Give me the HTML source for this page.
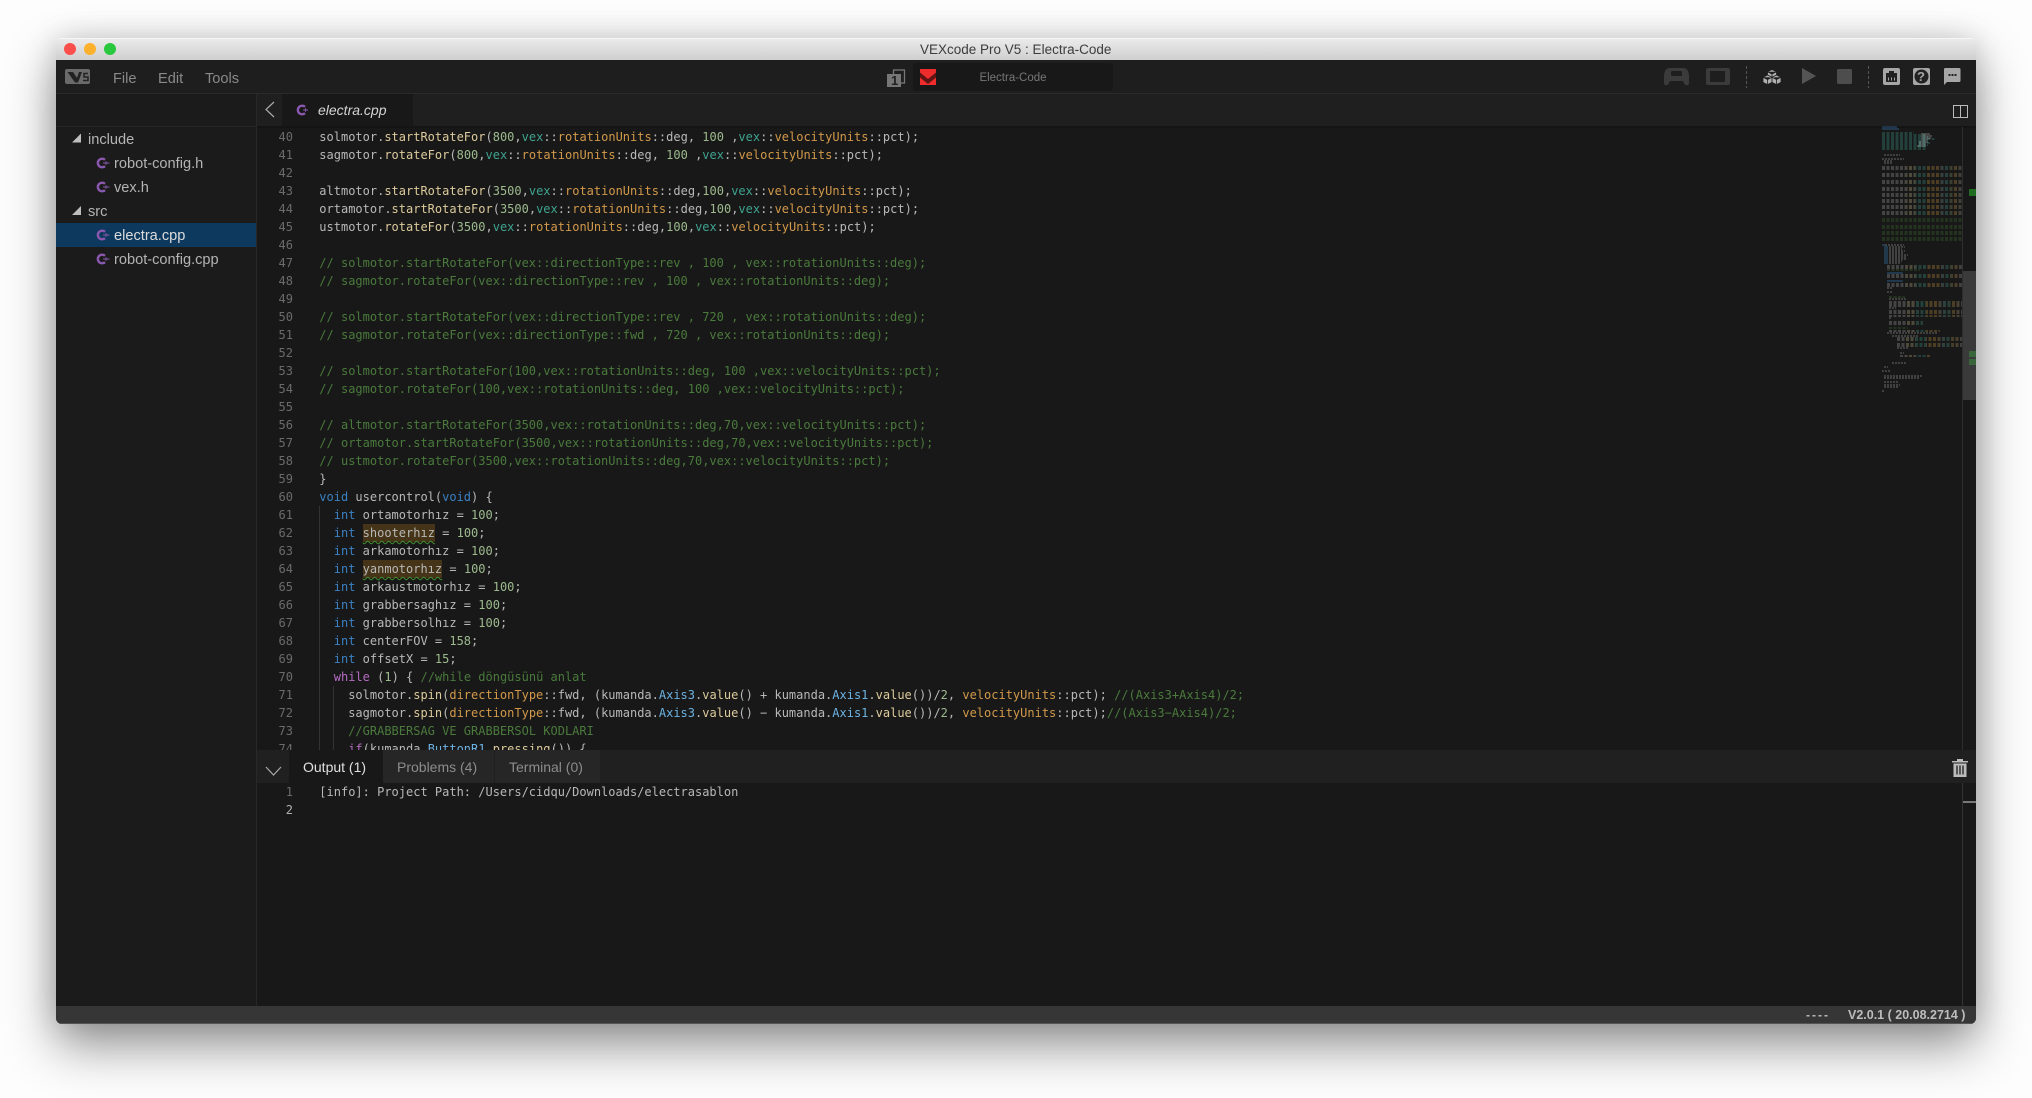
<!DOCTYPE html>
<html><head><meta charset="utf-8"><title>VEXcode Pro V5 : Electra-Code</title>
<style>
html,body{margin:0;padding:0;width:2032px;height:1098px;overflow:hidden;background:#fdfdfd}
#s{position:absolute;left:56px;top:38px;width:1920px;height:986px;border-radius:6px;box-shadow:0 22px 50px rgba(0,0,0,.42),0 0 30px rgba(0,0,0,.14)}
#w{position:absolute;left:0;top:0;width:2032px;height:1098px;clip-path:inset(38px 56px 74px 56px round 6px);font-family:"Liberation Sans",sans-serif}
#w>div,#w>svg{position:absolute}
.u{white-space:nowrap;font-size:14px;line-height:18px}
.b{font-size:14.6px}
pre{position:absolute;margin:0;font:12px/18px "DejaVu Sans Mono",monospace;color:#b8b8b8;font-variant-ligatures:none}
.m{color:#dccb9c}.n{color:#9dba8e}.t{color:#3fa38f}.o{color:#d2994a}.c{color:#4a7a3c}.k{color:#3a80c2}.p{color:#b56cc2}.a{color:#6cb2e2}
.h{background:#453417;display:inline-block;height:18px;text-decoration:underline wavy #3f9030 .6px;text-underline-offset:3px}
</style></head><body>
<div id="s"></div>
<div id="w">
<div style="left:56px;top:38px;width:1920px;height:22px;background:linear-gradient(#ececec,#cfcfcf);box-shadow:inset 0 1px 0 #f6f6f6"></div>
<div style="left:56px;top:60px;width:1920px;height:964px;background:#1b1b1b"></div>
<svg style="left:0;top:0" width="2032" height="1098">
<circle cx="70" cy="49" r="6" fill="#fc4f4b"/><circle cx="90" cy="49" r="6" fill="#fdb02c"/><circle cx="110" cy="49" r="6" fill="#2ac83f"/>
<rect x="56" y="60" width="1920" height="33" fill="#1e1e1e"/><rect x="56" y="93" width="1920" height="1" fill="#2a2a2a"/>
<rect x="257" y="94" width="1719" height="32" fill="#1f1f1f"/>
<rect x="282" y="94" width="131" height="32" fill="#181818"/>
<rect x="56" y="126" width="200" height="1" fill="#262626"/>
<rect x="257" y="126" width="1719" height="624" fill="#181818"/>
<rect x="257" y="126" width="1719" height="2" fill="#141414"/>
<rect x="256" y="94" width="1" height="912" fill="#282828"/>
<rect x="56" y="223" width="200" height="24" fill="#0e395f"/>
<!-- bottom panel -->
<rect x="257" y="750" width="1719" height="33" fill="#202020"/>
<rect x="257" y="783" width="1719" height="223" fill="#181818"/>
<rect x="289" y="750" width="94" height="33" fill="#181818"/>
<rect x="383" y="750" width="111" height="33" fill="#262626"/>
<rect x="495" y="750" width="105" height="33" fill="#262626"/>
<rect x="56" y="1006" width="1920" height="18" fill="#363636"/><rect x="56" y="1023" width="1920" height="1" fill="#555"/>
<!-- scrollbars -->
<rect x="1962" y="127" width="1" height="623" fill="#2e2e2e"/>
<rect x="1963" y="271" width="13" height="129" fill="#3a3a3a"/>
<rect x="1969" y="189" width="7" height="7" fill="#1f6b1f"/>
<rect x="1969" y="351" width="7" height="6" fill="#38653a"/><rect x="1969" y="359" width="7" height="6" fill="#38653a"/>
<rect x="1962" y="783" width="1" height="223" fill="#333"/><rect x="1963" y="801" width="13" height="2" fill="#777"/>
<!-- indent guides -->
<rect x="319" y="506" width="1" height="244" fill="#333"/><rect x="333" y="686" width="1" height="64" fill="#333"/>
<!-- minimap -->
<defs><linearGradient id="g" gradientUnits="userSpaceOnUse" x1="1882" y1="0" x2="1962" y2="0">
<stop offset="0" stop-color="#a8a8a8"/><stop offset=".3" stop-color="#a8a8a8"/><stop offset=".3" stop-color="#c9b98a"/><stop offset=".42" stop-color="#c9b98a"/><stop offset=".42" stop-color="#3c9b88"/><stop offset=".55" stop-color="#3c9b88"/><stop offset=".55" stop-color="#c8923f"/><stop offset=".72" stop-color="#c8923f"/><stop offset=".72" stop-color="#999"/><stop offset=".82" stop-color="#3c9b88"/><stop offset=".9" stop-color="#c8923f"/><stop offset="1" stop-color="#999"/>
</linearGradient></defs>
<g stroke-width=".9" fill="none" opacity=".62">
<path d="M1882 127H1897M1882 129H1899" stroke="#3a80c2"/>
<path d="M1882 133H1914M1882 135H1926M1882 137H1928M1882 139H1936M1882 141H1926M1882 143H1930M1882 145H1928M1882 147H1926M1882 149H1926" stroke="#3c9b88" stroke-dasharray="3 1.500"/>
<path d="M1921 134H1930M1921 136H1932M1921 138H1931M1921 140H1928M1919 142H1928M1919 144H1926M1917 146H1926" stroke="#aaa"/>
<path d="M1884 155H1900M1882 159H1904M1884 161H1893M1884 163H1893" stroke="#9a9a9a" stroke-dasharray="2 1"/>
<path d="M1882 167H1962M1882 169H1962M1882 174H1962M1882 176H1962M1882 181H1962M1882 183H1962M1882 188H1962M1882 190H1962M1882 194H1962M1882 196H1962M1882 200H1962M1882 202H1962M1882 206H1962M1882 208H1962M1882 212H1962M1882 214H1962M1887 266H1962M1887 268H1962M1887 275H1962M1887 277H1962M1887 284H1962M1887 286H1962M1889 302H1962M1889 304H1962M1889 306H1962M1889 311H1962M1889 313H1962M1889 316H1962M1889 322H1923M1889 324H1923M1889 331H1940M1897 338H1962M1897 340H1962M1897 344H1962M1897 346H1962M1900 356H1930" stroke="url(#g)" stroke-dasharray="3 1.500"/>
<path d="M1882 219H1962M1882 221H1962M1882 226H1962M1882 228H1962M1882 232H1962M1882 234H1962M1882 238H1962M1882 240H1962M1887 270H1920M1889 297H1905M1889 328H1908" stroke="#40702f" stroke-dasharray="3 1.500"/>
<path d="M1884 247H1888M1884 249H1888M1884 251H1888M1884 253H1888M1884 255H1888M1884 257H1888M1884 259H1888M1884 261H1888M1884 263H1888M1882 245H1885M1887 273H1903M1887 281H1903" stroke="#3a80c2"/>
<path d="M1889 247H1905M1889 249H1902M1889 251H1905M1889 253H1903M1889 255H1908M1889 257H1906M1889 259H1906M1889 261H1902M1889 263H1900M1885 245H1904M1887 288H1892M1887 292H1892M1889 299H1906M1889 308H1896M1889 318H1892M1887 333H1938M1892 336H1918M1897 348H1908M1900 353H1904M1892 363H1906M1884 367H1888M1882 371H1890M1884 376H1922M1884 378H1920M1884 382H1899M1884 385H1900M1884 387H1898M1882 391H1885" stroke="#9a9a9a" stroke-dasharray="2 1"/>
</g>
<!-- menu-left logo -->
<rect x="65" y="69" width="25" height="15" rx="2" fill="#6a6a6a"/>
<path d="M67.500 72H73L77 78 79 72h3L78 82.500H75Z" fill="#222"/>
<path d="M88 73.500H84V77H88V80.500H83" stroke="#222" stroke-width="1.500" fill="none"/>
<!-- project icons -->
<rect x="893.500" y="70" width="11" height="13" fill="none" stroke="#777" stroke-width="1.300"/>
<rect x="887" y="74" width="14" height="13" fill="#777"/>
<rect x="913" y="63" width="200" height="28" rx="4" fill="#181818"/>
<rect x="920" y="69" width="16" height="16" fill="#ee2c2c"/>
<path d="M920 72.500 928 79 936 72.500V77.500L928 84 920 77.500Z" fill="#5e1414"/>
<!-- right toolbar -->
<path d="M1670 68h13c4 0 6 3 6 9v6c0 3-4 3-5 0l-1-2h-13l-1 2c-1 3-5 3-5 0v-6c0-6 2-9 6-9z" fill="#3b3b3b"/>
<rect x="1671" y="71" width="11" height="5" rx="1" fill="#1e1e1e"/>
<rect x="1706" y="68" width="24" height="17" rx="2" fill="#3b3b3b"/><rect x="1710" y="71" width="15" height="11" fill="#1e1e1e"/>
<path d="M1746.500 66V88M1868.500 66V88" stroke="#555" stroke-dasharray="3 2"/>
<g fill="#b0b0b0" stroke="#1e1e1e" stroke-width=".8">
<path d="M1772 69.500l4.500 2.300v5l-4.500 2.300-4.500-2.300v-5zM1767.500 71.800l4.500 2.300 4.500-2.300M1772 74.100v5"/>
<path d="M1767.500 75l4.500 2.300v5l-4.500 2.300-4.500-2.300v-5zM1763 77.300l4.500 2.300 4.500-2.300M1767.500 79.600v5"/>
<path d="M1776.500 75l4.500 2.300v5l-4.500 2.300-4.500-2.300v-5zM1772 77.300l4.500 2.300 4.500-2.300M1776.500 79.600v5"/>
</g>
<path d="M1802 68 1816 76 1802 84Z" fill="#555"/>
<rect x="1837" y="69" width="15" height="15" rx="1.500" fill="#4d4d4d"/>
<rect x="1883" y="68" width="17" height="17" rx="2" fill="#a6a6a6"/>
<path d="M1886 73h3v-2h5v2h3v9h-11z" fill="#222"/><path d="M1888.500 77.500v3M1891.500 77.500v3M1894.500 77.500v3" stroke="#a6a6a6"/>
<rect x="1913" y="68" width="17" height="17" rx="2" fill="#a6a6a6"/><circle cx="1921.500" cy="76.500" r="7" fill="#222"/>
<path d="M1945 68h14a1.500 1.500 0 0 1 1.500 1.500v11a1.500 1.500 0 0 1-1.500 1.500h-12l-3 3v-16a1.500 1.500 0 0 1 1-1z" fill="#a6a6a6"/>
<path d="M1948.500 75h2M1951.500 75h2M1954.500 75h2" stroke="#222" stroke-width="2"/>
<!-- split icon, chevrons -->
<path d="M1953.500 105.500h14v12h-14zM1960.500 105.500v12" fill="none" stroke="#bbb"/>
<path d="M274 102 266 109.500 274 117" fill="none" stroke="#aaa" stroke-width="1.200"/>
<path d="M266 767 273.500 775 281 767" fill="none" stroke="#aaa" stroke-width="1.200"/>
<!-- C++ icons -->
<g fill="none" stroke="#8a58ae" stroke-width="2.400">
<path d="M305 106.800A4.300 4.300 0 1 0 305 113.200"/>
<path d="M105 159.800A4.300 4.300 0 1 0 105 166.200"/>
<path d="M105 183.800A4.300 4.300 0 1 0 105 190.200"/>
<path d="M105 231.800A4.300 4.300 0 1 0 105 238.200"/>
<path d="M105 255.800A4.300 4.300 0 1 0 105 262.200"/>
</g>
<path d="M303 110h5M305.500 108.300v3.400M103 163h6.500M106 161.300v3.400M103 187h6.500M106 185.300v3.400M103 235h6.500M106 233.300v3.400M103 259h6.500M106 257.300v3.400" stroke="#8a58ae" stroke-width="1"/>
<path d="M72 142.500 81 142.500 81 133.500ZM72 215 81 215 81 206Z" fill="#bdbdbd"/>
<!-- trash -->
<path d="M1952 761h16v1.500h-16zM1957 759h6v2h-6z" fill="#bbb"/>
<path d="M1953.500 763.500h13V777h-13z" fill="#bbb"/>
<path d="M1957 765.500v9M1960 765.500v9M1963 765.500v9" stroke="#333" stroke-width="1.500"/>
</svg>

<div class="u" style="left:920px;top:41px;color:#3c3c3c;font-size:13.500px">VEXcode Pro V5 : Electra-Code</div>
<div class="u b" style="left:113px;top:70px;color:#8a8a8a">File</div>
<div class="u b" style="left:158px;top:70px;color:#8a8a8a">Edit</div>
<div class="u b" style="left:205px;top:70px;color:#8a8a8a">Tools</div>
<div class="u" style="left:891px;top:72px;color:#222;font-weight:bold;font-size:13px">1</div>
<div class="u" style="left:913px;top:69px;width:200px;text-align:center;color:#777;font-size:11.500px">Electra-Code</div>
<div class="u" style="left:1917px;top:68px;color:#a6a6a6;font-weight:bold;font-size:13px">?</div>
<div class="u" style="left:318px;top:101px;color:#d4d4d4;font-style:italic">electra.cpp</div>

<div class="u b" style="left:88px;top:131px;color:#b4b4b4">include</div>
<div class="u b" style="left:114px;top:155px;color:#b4b4b4">robot-config.h</div>
<div class="u b" style="left:114px;top:179px;color:#b4b4b4">vex.h</div>
<div class="u b" style="left:88px;top:203px;color:#b4b4b4">src</div>
<div class="u b" style="left:114px;top:227px;color:#dcdcdc">electra.cpp</div>
<div class="u b" style="left:114px;top:251px;color:#b4b4b4">robot-config.cpp</div>

<div style="left:257px;top:128px;width:1625px;height:622px;overflow:hidden">
<pre style="left:0;top:0;width:36px;text-align:right;color:#6b6b6b">40
41
42
43
44
45
46
47
48
49
50
51
52
53
54
55
56
57
58
59
60
61
62
63
64
65
66
67
68
69
70
71
72
73
74</pre>
<pre style="left:62.300px;top:0">solmotor.<span class="m">startRotateFor</span>(<span class="n">800</span>,<span class="t">vex</span>::<span class="o">rotationUnits</span>::deg, <span class="n">100</span> ,<span class="t">vex</span>::<span class="o">velocityUnits</span>::pct);
sagmotor.<span class="m">rotateFor</span>(<span class="n">800</span>,<span class="t">vex</span>::<span class="o">rotationUnits</span>::deg, <span class="n">100</span> ,<span class="t">vex</span>::<span class="o">velocityUnits</span>::pct);

altmotor.<span class="m">startRotateFor</span>(<span class="n">3500</span>,<span class="t">vex</span>::<span class="o">rotationUnits</span>::deg,<span class="n">100</span>,<span class="t">vex</span>::<span class="o">velocityUnits</span>::pct);
ortamotor.<span class="m">startRotateFor</span>(<span class="n">3500</span>,<span class="t">vex</span>::<span class="o">rotationUnits</span>::deg,<span class="n">100</span>,<span class="t">vex</span>::<span class="o">velocityUnits</span>::pct);
ustmotor.<span class="m">rotateFor</span>(<span class="n">3500</span>,<span class="t">vex</span>::<span class="o">rotationUnits</span>::deg,<span class="n">100</span>,<span class="t">vex</span>::<span class="o">velocityUnits</span>::pct);

<span class="c">// solmotor.startRotateFor(vex::directionType::rev , 100 , vex::rotationUnits::deg);
// sagmotor.rotateFor(vex::directionType::rev , 100 , vex::rotationUnits::deg);

// solmotor.startRotateFor(vex::directionType::rev , 720 , vex::rotationUnits::deg);
// sagmotor.rotateFor(vex::directionType::fwd , 720 , vex::rotationUnits::deg);

// solmotor.startRotateFor(100,vex::rotationUnits::deg, 100 ,vex::velocityUnits::pct);
// sagmotor.rotateFor(100,vex::rotationUnits::deg, 100 ,vex::velocityUnits::pct);

// altmotor.startRotateFor(3500,vex::rotationUnits::deg,70,vex::velocityUnits::pct);
// ortamotor.startRotateFor(3500,vex::rotationUnits::deg,70,vex::velocityUnits::pct);
// ustmotor.rotateFor(3500,vex::rotationUnits::deg,70,vex::velocityUnits::pct);</span>
}
<span class="k">void</span> usercontrol(<span class="k">void</span>) {
  <span class="k">int</span> ortamotorhız = <span class="n">100</span>;
  <span class="k">int</span> <span class="h">shooterhız</span> = <span class="n">100</span>;
  <span class="k">int</span> arkamotorhız = <span class="n">100</span>;
  <span class="k">int</span> <span class="h">yanmotorhız</span> = <span class="n">100</span>;
  <span class="k">int</span> arkaustmotorhız = <span class="n">100</span>;
  <span class="k">int</span> grabbersaghız = <span class="n">100</span>;
  <span class="k">int</span> grabbersolhız = <span class="n">100</span>;
  <span class="k">int</span> centerFOV = <span class="n">158</span>;
  <span class="k">int</span> offsetX = <span class="n">15</span>;
  <span class="p">while</span> (<span class="n">1</span>) { <span class="c">//while döngüsünü anlat</span>
    solmotor.<span class="m">spin</span>(<span class="o">directionType</span>::fwd, (kumanda.<span class="a">Axis3</span>.<span class="m">value</span>() + kumanda.<span class="a">Axis1</span>.<span class="m">value</span>())/<span class="n">2</span>, <span class="o">velocityUnits</span>::pct); <span class="c">//(Axis3+Axis4)/2;</span>
    sagmotor.<span class="m">spin</span>(<span class="o">directionType</span>::fwd, (kumanda.<span class="a">Axis3</span>.<span class="m">value</span>() − kumanda.<span class="a">Axis1</span>.<span class="m">value</span>())/<span class="n">2</span>, <span class="o">velocityUnits</span>::pct);<span class="c">//(Axis3−Axis4)/2;</span>
    <span class="c">//GRABBERSAG VE GRABBERSOL KODLARI</span>
    <span class="p">if</span>(kumanda.<span class="a">ButtonR1</span>.<span class="m">pressing</span>()) {</pre>
</div>

<div class="u" style="left:303px;top:758px;color:#e0e0e0">Output (1)</div>
<div class="u" style="left:397px;top:758px;color:#8c8c8c">Problems (4)</div>
<div class="u" style="left:509px;top:758px;color:#8c8c8c">Terminal (0)</div>
<pre style="left:257px;top:783px;width:36px;text-align:right;color:#6b6b6b">1
<span style="color:#b0b0b0">2</span></pre>
<pre style="left:319.300px;top:783px">[info]: Project Path: /Users/cidqu/Downloads/electrasablon</pre>

<div class="u" style="left:1806px;top:1006px;color:#bdbdbd;font-size:12px;font-weight:bold;letter-spacing:2px">----</div>
<div class="u" style="left:1848px;top:1006px;color:#bdbdbd;font-size:12.500px;font-weight:bold">V2.0.1 ( 20.08.2714 )</div>
</div>
</body></html>
